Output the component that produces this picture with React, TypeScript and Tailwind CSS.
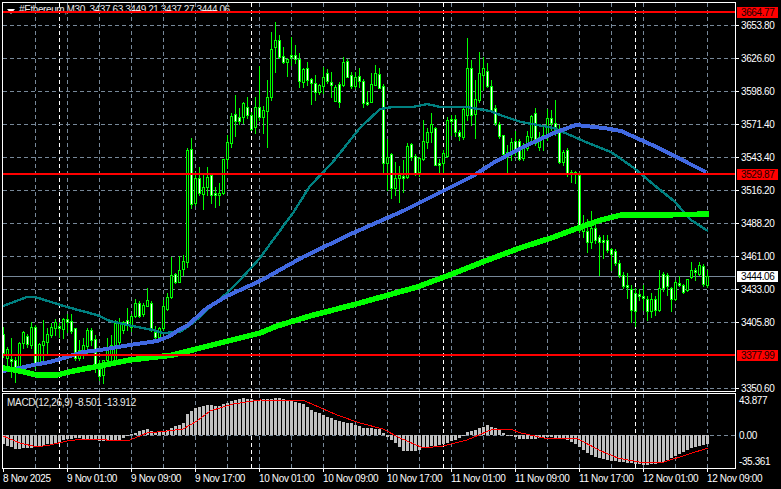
const candles: number[][] = [
  [327,334,353,357,1],[347,349,358,370,0],[338,359,361,377,1],[357,360,368,382,1],[342,343,367,373,0],
  [331,332,343,348,0],[334,336,344,347,1],[322,327,345,348,0],[325,327,363,368,1],[343,344,362,365,0],
  [320,341,345,363,0],[328,334,342,353,0],[323,327,335,337,0],[319,322,328,335,0],[323,326,328,337,1],
  [318,319,329,338,0],[314,319,322,332,1],[314,321,331,333,1],[328,328,358,360,1],[340,350,358,360,0],
  [338,345,350,358,0],[328,330,346,353,0],[328,330,340,345,1],[335,339,368,372,1],[360,369,376,380,1],
  [360,360,375,383,0],[338,347,360,363,0],[335,345,355,360,0],[320,323,360,362,0],[318,322,342,345,0],
  [321,322,330,333,0],[308,320,325,330,1],[314,316,327,331,0],[299,303,316,317,0],[301,303,316,317,1],
  [303,305,314,316,0],[288,300,306,306,0],[301,303,328,331,1],[326,332,337,339,1],[327,328,337,339,0],
  [300,306,328,330,0],[293,297,309,310,0],[257,275,297,298,0],[273,274,282,283,1],[256,270,282,282,0],
  [255,261,269,275,0],[148,150,262,267,0],[138,149,204,208,1],[172,178,203,205,0],[167,178,193,195,1],
  [173,187,194,209,0],[167,177,187,195,0],[173,175,195,203,1],[187,193,194,207,1],[183,193,194,205,0],
  [159,159,193,194,0],[135,142,159,168,0],[113,116,143,147,0],[95,114,121,136,1],[108,117,121,124,1],
  [102,103,117,123,0],[97,107,115,118,1],[112,115,129,130,1],[97,107,127,133,0],[66,107,117,120,1],
  [106,110,117,133,0],[80,97,111,147,0],[32,49,97,100,0],[22,40,47,72,0],[35,40,57,58,1],
  [47,56,62,63,1],[58,59,62,76,0],[37,55,57,65,1],[45,55,59,63,1],[53,59,81,87,1],
  [68,69,82,87,0],[62,68,80,85,1],[78,79,83,104,1],[75,83,92,100,1],[84,85,92,94,0],
  [67,77,86,93,0],[69,73,81,83,1],[72,82,85,97,1],[85,87,101,101,0],[82,84,102,107,1],
  [57,62,85,86,0],[59,61,77,77,1],[72,75,86,88,1],[72,77,86,88,0],[68,76,81,87,1],
  [79,81,103,107,1],[91,102,103,105,1],[73,84,102,102,0],[65,73,85,85,0],[68,74,88,88,1],
  [84,86,163,173,1],[139,157,163,190,0],[153,154,188,198,1],[162,178,188,195,0],[166,175,178,202,0],
  [160,176,178,192,1],[143,146,177,178,0],[143,144,157,160,1],[154,156,173,175,1],[157,158,172,176,0],
  [120,141,159,160,0],[128,132,142,148,0],[113,124,132,142,0],[127,128,165,165,1],[159,163,165,173,1],
  [150,153,163,173,0],[117,120,156,157,0],[115,119,121,135,1],[115,119,132,136,1],[130,132,136,140,1],
  [108,109,137,139,0],[38,68,115,120,0],[60,68,115,125,1],[80,99,114,138,0],[52,73,100,102,0],
  [57,68,75,90,0],[63,71,86,87,1],[80,86,110,112,1],[105,108,123,125,1],[122,124,136,138,1],
  [135,135,154,155,1],[145,152,153,172,0],[138,142,153,160,0],[131,141,152,155,1],[139,141,159,160,1],
  [143,147,158,160,0],[131,136,148,150,0],[115,116,137,140,0],[108,113,143,145,1],[132,137,147,150,0],
  [125,135,137,150,1],[109,118,136,140,0],[110,118,123,130,1],[100,123,130,135,1],[125,130,162,163,1],
  [150,152,162,165,0],[148,150,174,176,1],[170,172,174,182,1],[171,172,174,183,0],[172,175,230,232,1],
  [215,223,231,237,0],[219,231,242,252,1],[211,228,242,248,0],[220,228,240,243,1],[235,237,242,275,1],
  [235,240,242,258,1],[235,240,250,252,1],[248,249,254,270,1],[249,251,263,265,1],[260,263,275,277,1],
  [272,275,286,288,1],[273,285,287,298,1],[285,289,310,322,1],[288,293,311,326,1],[289,294,296,300,1],
  [285,296,297,310,1],[296,299,311,320,1],[293,299,311,317,0],[296,299,310,315,1],[270,288,310,311,0],
  [272,274,288,291,1],[273,275,286,295,1],[287,288,299,311,1],[280,282,299,300,0],[276,283,285,286,1],
  [284,285,292,293,1],[279,279,290,291,0],[262,270,277,278,0],[268,270,271,280,1],[262,265,274,275,0],
  [264,266,284,286,1],[270,276,285,287,0],
];

const blue = "3,371 20,368 33,365 50,362 67,357 83,352 100,350 130,345 157,341 170,336 180,329 187,326 207,308 227,296 260,281 303,257 353,233 403,211 443,191 473,176 493,163 521,148 554,133 576,125 604,128 621,131 661,149 688,163 706,172";
const lime = "3,368 20,371 37,375 57,375 73,371 100,366 130,360 173,355 200,348 260,333 277,326 310,316 360,303 417,287 447,276 480,263 520,248 554,237 578,228 601,220 621,215 661,215 709,214";
const teal = "3,306 27,297 35,297 67,307 97,315 110,321 137,327 153,330 163,333 180,332 193,323 207,310 227,293 240,280 260,258 273,240 293,213 310,186 332,163 360,128 380,109 393,107 413,107 427,104 440,107 467,107 490,111 503,116 521,122 554,128 588,143 611,152 634,168 654,185 674,201 691,220 708,231";
const signal = "3,436 20,443 37,447 50,445 67,441 83,439 100,439 113,441 130,440 147,433 167,431 183,429 197,421 210,411 233,404 260,400 305,401 337,415 360,423 383,429 400,438 423,448 443,446 467,440 493,429 510,429 521,433 544,438 578,439 601,451 618,458 644,463 664,462 708,448";
const histKeys = [[3,444],[11,447],[15,449],[27,448],[39,447],[47,444],[55,443],[67,439],[75,438],[95,440],[103,441],[115,441],[123,438],[127,436],[131,434],[139,431],[147,429],[155,432],[163,432],[171,428],[183,423],[187,414],[195,408],[207,405],[219,406],[231,401],[243,398],[255,400],[280,398],[293,401],[303,404],[313,411],[323,415],[337,421],[350,423],[363,428],[380,429],[385,435],[393,441],[403,451],[417,451],[423,448],[433,446],[447,443],[460,438],[467,432],[480,428],[487,425],[497,429],[507,435],[520,439],[534,439],[551,437],[564,439],[576,444],[581,449],[588,454],[601,459],[621,462],[644,465],[661,463],[678,454],[691,448],[708,444]];

function histAt(x: number) {
  for (let i = 1; i < histKeys.length; i++) {
    const [x0, y0] = histKeys[i - 1];
    const [x1, y1] = histKeys[i];
    if (x <= x1) return Math.round(y0 + ((y1 - y0) * (x - x0)) / (x1 - x0));
  }
  return 444;
}

const vGrid = Array.from({ length: 22 }, (_, i) => 35 + i * 32);
const hGrid = [25, 58, 91, 124, 157, 190, 223, 256, 289, 322, 388];
const seps = [59, 251, 443, 635];
const xs = candles.map((_, i) => 3 + i * 4);

const prices = ["3653.80", "3626.60", "3598.60", "3571.40", "3543.40", "3516.20", "3488.20", "3461.00", "3433.00", "3405.80", "", "3350.60"];
const times = ["8 Nov 2025", "9 Nov 01:00", "9 Nov 09:00", "9 Nov 17:00", "10 Nov 01:00", "10 Nov 09:00", "10 Nov 17:00", "11 Nov 01:00", "11 Nov 09:00", "11 Nov 17:00", "12 Nov 01:00", "12 Nov 09:00"];

function Verticals({ y1, y2 }: { y1: number; y2: number }) {
  return (
    <>
      {vGrid.map((x) => (
        <line key={x} x1={x + 0.5} x2={x + 0.5} y1={y1} y2={y2} stroke="#778899" strokeDasharray="4 3" />
      ))}
      {seps.map((x) => (
        <line key={x} x1={x + 0.5} x2={x + 0.5} y1={y1} y2={y2} stroke="#ffffff" strokeDasharray="4 3" />
      ))}
    </>
  );
}

function MainChart() {
  return (
    <svg viewBox="3 3 732 388" className="block w-[732px] h-[388px] relative" shapeRendering="crispEdges">
      <Verticals y1={3} y2={391} />
      {hGrid.map((y) => (
        <line key={y} x1={3} x2={735} y1={y + 0.5} y2={y + 0.5} stroke="#778899" strokeDasharray="4 3" />
      ))}
      <line x1={3} x2={735} y1={276.5} y2={276.5} stroke="#778899" />
      {candles.map(([hi, top, bot, lo, down], i) => (
        <g key={i}>
          <rect x={xs[i]} y={hi} width={1} height={lo - hi + 1} fill="#00ff00" />
          <rect x={xs[i] - 1} y={top} width={3} height={Math.max(bot - top + 1, 3)} fill="#00ff00" />
          <rect x={xs[i]} y={top + 1} width={1} height={Math.max(bot - top - 1, 1)} fill={down ? "#ffffff" : "#000000"} />
        </g>
      ))}
      <polyline points={teal} fill="none" stroke="#008080" strokeWidth={2.4} />
      <polyline points={blue} fill="none" stroke="#4169e1" strokeWidth={4} />
      <polyline points={lime} fill="none" stroke="#00ff00" strokeWidth={5.5} />
      <rect x={3} y={11} width={732} height={2} fill="#ff0000" />
      <rect x={3} y={173} width={732} height={2} fill="#ff0000" />
      <rect x={3} y={354} width={732} height={2} fill="#ff0000" />
    </svg>
  );
}

function MacdChart() {
  return (
    <svg viewBox="3 394 732 74" className="block w-[732px] h-[74px]" shapeRendering="crispEdges">
      <Verticals y1={394} y2={468} />
      <line x1={3} x2={735} y1={435.5} y2={435.5} stroke="#778899" strokeDasharray="4 3" />
      {xs.map((x) => {
        const y = histAt(x);
        return <rect key={x} x={x - 1} y={Math.min(y, 435)} width={3} height={Math.max(Math.abs(y - 435), 1)} fill="#c0c0c0" />;
      })}
      <polyline points={signal} fill="none" stroke="#ff0000" strokeWidth={1} />
    </svg>
  );
}

export default function App() {
  return (
    <div className="w-[781px] h-[489px] bg-black text-white overflow-hidden flex flex-col pt-[2px] pl-[2px] font-['Liberation_Sans',Arial,sans-serif] text-[10px] leading-[12px]">
      <div className="flex">
        <div className="w-[734px] flex flex-col gap-[1px]">
          <div className="relative border border-white">
            <div className="absolute left-[4px] top-[6px] w-0 h-0 border-x-[4px] border-x-transparent border-t-[5px] border-t-white" />
            <div className="absolute left-[16px] top-[1px] whitespace-pre text-[#e8e8e8] tracking-[-0.41px]">#Ethereum,M30  3437.63 3449.21 3437.27 3444.06</div>
            <MainChart />
          </div>
          <div className="relative border border-white">
            <MacdChart />
            <div className="absolute left-[4px] top-[3px] whitespace-pre text-[#e8e8e8] tracking-[-0.3px]">MACD(12,26,9) -8.501 -13.912</div>
          </div>
        </div>
        <div className="relative w-[45px] flex flex-col">
          <div className="h-[391px] pt-[7px] flex flex-col">
            {prices.map((p, i) => (
              <div key={i} className="h-[33px] flex items-center gap-[2px] shrink-0">
                <div className={p ? "w-[3px] h-px bg-white" : "w-[3px]"} />
                <span className="tracking-[-0.4px]">{p}</span>
              </div>
            ))}
          </div>
          <div className="pl-[3px] flex flex-col tracking-[-0.4px]">
            <span className="mt-[2px]">43.877</span>
            <span className="mt-[23px]">0.00</span>
            <span className="mt-[14px]">-35.361</span>
          </div>
          <div className="absolute left-[1px] top-[5px] w-[41px] h-[11px] bg-[#ff0000] text-[#1a0000] pl-[4px] leading-[11px] tracking-[-0.4px]">3664.77</div>
          <div className="absolute left-[1px] top-[167px] w-[41px] h-[11px] bg-[#ff0000] text-[#1a0000] pl-[4px] leading-[11px] tracking-[-0.4px]">3529.87</div>
          <div className="absolute left-[1px] top-[269px] w-[41px] h-[11px] bg-white text-black pl-[4px] leading-[11px] tracking-[-0.4px]">3444.06</div>
          <div className="absolute left-[1px] top-[348px] w-[41px] h-[11px] bg-[#ff0000] text-[#1a0000] pl-[4px] leading-[11px] tracking-[-0.4px]">3377.99</div>
        </div>
      </div>
      <div className="flex pl-[1px] tracking-[-0.35px]">
        {times.map((t) => (
          <div key={t} className="w-[64px] shrink-0 flex flex-col">
            <div className="w-px h-[3px] bg-white" />
            <span className="whitespace-nowrap mt-[1px]">{t}</span>
          </div>
        ))}
      </div>
    </div>
  );
}
